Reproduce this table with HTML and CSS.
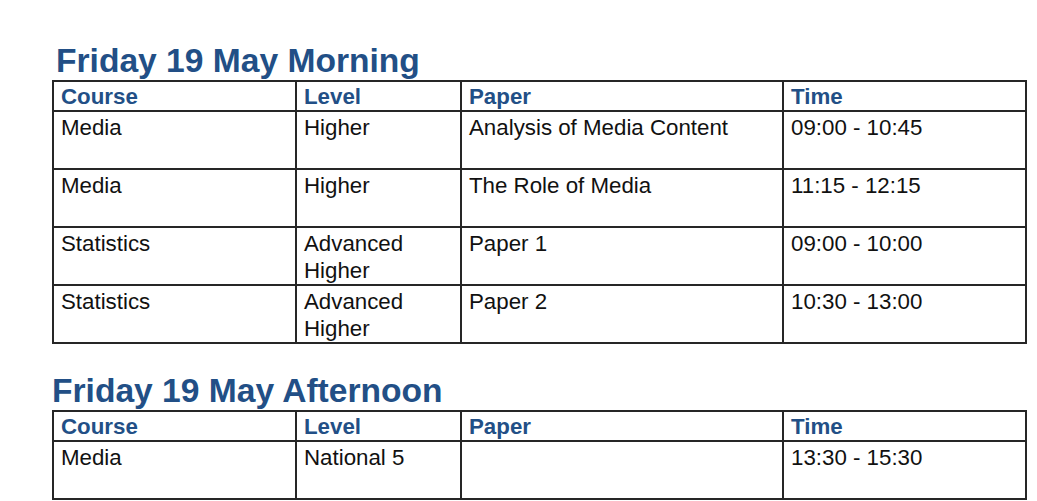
FILE: index.html
```html
<!DOCTYPE html>
<html lang="en">
<head>
<meta charset="utf-8">
<title>Exam timetable</title>
<link rel="stylesheet" href="styles.css">
</head>
<body>
<main class="page">
  <section class="session">
    <h2 class="session-title session-title--first">Friday 19 May Morning</h2>
    <table class="timetable">
      <thead>
        <tr>
          <th class="c-course">Course</th>
          <th class="c-level">Level</th>
          <th class="c-paper">Paper</th>
          <th class="c-time">Time</th>
        </tr>
      </thead>
      <tbody>
        <tr><td>Media</td><td>Higher</td><td>Analysis of Media Content</td><td>09:00 - 10:45</td></tr>
        <tr><td>Media</td><td>Higher</td><td>The Role of Media</td><td>11:15 - 12:15</td></tr>
        <tr><td>Statistics</td><td>Advanced Higher</td><td>Paper 1</td><td>09:00 - 10:00</td></tr>
        <tr><td>Statistics</td><td>Advanced Higher</td><td>Paper 2</td><td>10:30 - 13:00</td></tr>
      </tbody>
    </table>
  </section>
  <section class="session session--next">
    <h2 class="session-title">Friday 19 May Afternoon</h2>
    <table class="timetable">
      <thead>
        <tr>
          <th class="c-course">Course</th>
          <th class="c-level">Level</th>
          <th class="c-paper">Paper</th>
          <th class="c-time">Time</th>
        </tr>
      </thead>
      <tbody>
        <tr><td>Media</td><td>National 5</td><td></td><td>13:30 - 15:30</td></tr>
      </tbody>
    </table>
  </section>
</main>
</body>
</html>
```

FILE: styles.css
```css
html, body {
  margin: 0;
  padding: 0;
  background: #ffffff;
}

body {
  font-family: "Liberation Sans", Arial, sans-serif;
  color: #111111;
  overflow: hidden;
}

.page {
  padding: 42px 0 0 52px;
}

.session--next {
  margin-top: 28px;
}

.session-title {
  margin: 0;
  font-size: 33.6px;
  line-height: 38px;
  font-weight: 700;
  color: #224f86;
  white-space: nowrap;
}

.session-title--first {
  padding-left: 4px;
}

.timetable {
  width: 975px;
  table-layout: fixed;
  border-collapse: separate;
  border-spacing: 0;
  border-top: 2px solid #262626;
  border-left: 2px solid #262626;
  font-size: 22.3px;
}

.timetable th,
.timetable td {
  box-sizing: border-box;
  border-right: 2px solid #262626;
  border-bottom: 2px solid #262626;
  padding: 3px 6px 0 7px;
  text-align: left;
  vertical-align: top;
}

.timetable th {
  height: 30px;
  padding-top: 2px;
  line-height: 26px;
  font-weight: 700;
  color: #224f86;
}

.timetable td {
  height: 58px;
  line-height: 26.5px;
  font-weight: 400;
}

.c-course { width: 243px; }
.c-level  { width: 165px; }
.c-paper  { width: 322px; }
.c-time   { width: 243px; }
```
